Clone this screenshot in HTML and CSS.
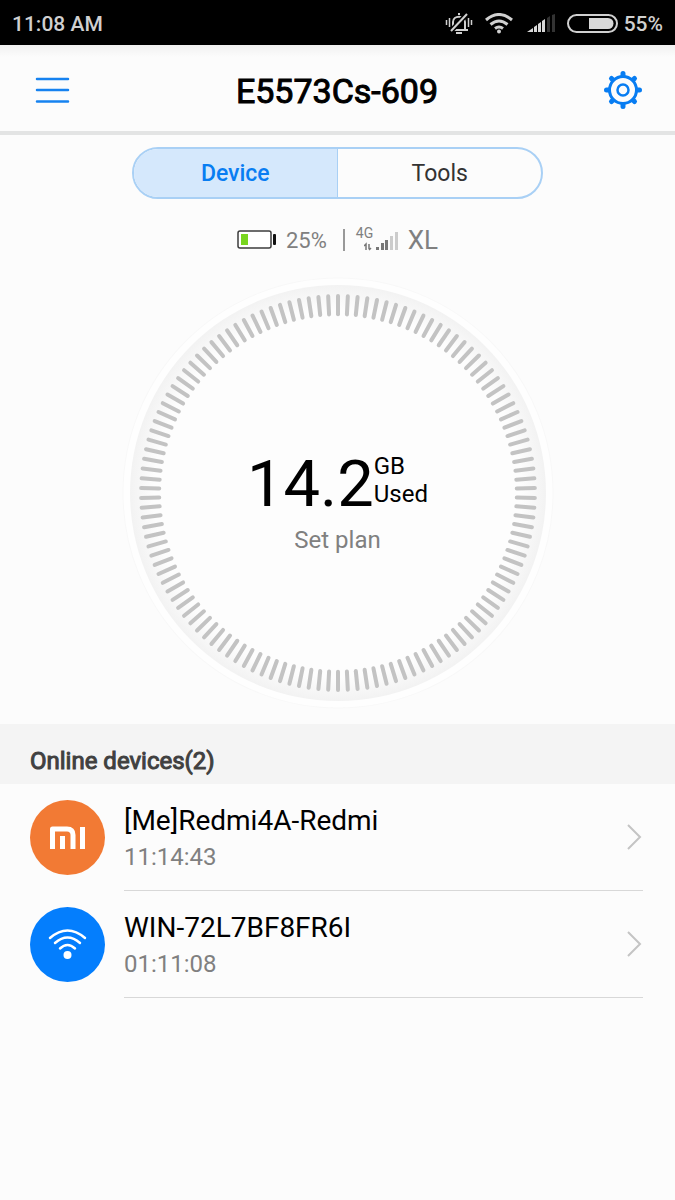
FILE: index.html
```html
<!DOCTYPE html>
<html lang="en">
<head>
<meta charset="utf-8">
<meta name="viewport" content="width=device-width, initial-scale=1">
<title>E5573Cs-609</title>
<link rel="stylesheet" href="styles.css">
</head>
<body>
<div class="status-bar">
  <span>11:08 AM</span>
  <div class="status-icons">
    <svg class="bell" width="28" height="24" viewBox="0 0 28 24" fill="none" stroke="#d0d0d0" stroke-width="2" aria-label="Silent">
      <path d="M6 18h17M8 17V10c0-7 12-7 12 0v7M11 21h6M14 1v2"/>
      <path d="M22 2L6 19" stroke="#000" stroke-width="5"/>
      <path d="M22 2L6 19"/>
      <path d="M1.500 8v5M4.500 6v9M23.500 6v9M26.500 8v5" stroke-width="1.500"/>
    </svg>
    <svg class="wifi" width="30" height="22" viewBox="0 0 30 22" fill="none" stroke="#d0d0d0" stroke-width="3" aria-label="Wi-Fi">
      <path d="M2 7q13-11 26 0M6.500 11.500q8.500-7 17 0M11 15.500q4-3 8 0"/>
      <circle cx="15" cy="18.500" r="2" fill="#d0d0d0" stroke="none"/>
    </svg>
    <svg class="bars" width="28" height="20" viewBox="0 0 28 20" aria-label="Signal">
      <path fill="#d8d8d8" d="M0 18l6-4v4zM7 13l3-2v7H7zM11 10l3-2v10h-3zM15 7l3-2v13h-3z"/>
      <path fill="#333" d="M20 4l3-2v16h-3zM25 1l3-1v18h-3z"/>
    </svg>
    <svg class="phone-battery" width="51" height="20" viewBox="0 0 51 20" aria-label="Battery">
      <rect x="1" y="1" width="49" height="17" rx="8.500" fill="none" stroke="#d0d0d0" stroke-width="2"/>
      <path fill="#d8d8d8" d="M22 4h19a5.500 5.500 0 0 1 0 11H22z"/>
    </svg>
    <span>55%</span>
  </div>
</div>

<header class="app-header">
  <button class="icon-button" aria-label="Menu">
    <svg width="36" height="38" viewBox="0 0 36 38" stroke="#1682f0" stroke-width="2.500" stroke-linecap="round"><path d="M3 8h31M3 19h31M3 30.500h31"/></svg>
  </button>
  <h1>E5573Cs-609</h1>
  <button class="icon-button" aria-label="Settings">
    <svg width="38" height="38" viewBox="-19 -19 38 38" fill="none" stroke="#087df2">
      <circle r="13.500" stroke-width="3"/><circle r="5.500" stroke-width="2.500"/>
      <path stroke-width="5" stroke-linecap="round" d="M0-14.500v-2M0 14.500v2M-14.500 0h-2M14.500 0h2M10.500-10.500l1-1M-10.500-10.500l-1-1M10.500 10.500l1 1M-10.500 10.500l-1 1"/>
    </svg>
  </button>
</header>

<main>
  <nav class="tabs" aria-label="Sections">
    <button class="tab active">Device</button>
    <button class="tab">Tools</button>
  </nav>

  <div class="router-status">
    <svg width="39" height="20" viewBox="0 0 39 20" aria-label="Router battery">
      <rect x="1" y="1" width="33" height="17" rx="2" fill="#fff" stroke="#3c3c3c" stroke-width="1.500"/>
      <rect x="4" y="4" width="7" height="11" fill="#78d51e"/>
      <rect x="36" y="4" width="3" height="11" rx="1" fill="#111"/>
    </svg>
    <span class="percent">25%</span>
    <span class="separator"></span>
    <span class="network">
      <span class="network-type">4G</span>
      <svg width="34" height="20" viewBox="0 0 34 20" aria-label="Network signal">
        <path d="M2 19v-5M0 15l2-2 0 2M5 13v5M5 19l2-2" stroke="#777" stroke-width="1.500" fill="none"/>
        <g fill="#777"><rect x="12" y="16" width="3" height="3"/><rect x="17" y="12" width="3" height="7"/><rect x="21" y="9" width="3" height="10"/></g>
        <g fill="#ccc"><rect x="26" y="5" width="3" height="14"/><rect x="31" y="1" width="3" height="18"/></g>
      </svg>
    </span>
    <span class="carrier">XL</span>
  </div>

  <section class="dial" aria-label="Data usage">
    <svg class="dial-ring" viewBox="-215 -215 430 430" aria-hidden="true">
      <defs>
        <radialGradient id="rim" gradientUnits="userSpaceOnUse" cx="0" cy="0" r="208">
          <stop offset=".88" stop-color="#fdfdfd"/>
          <stop offset="1" stop-color="#f2f2f2"/>
        </radialGradient>
      </defs>
      <circle r="214" fill="#fefefe" stroke="#f8f8f8"/>
      <circle r="207" fill="url(#rim)"/>
      <g id="ticks" stroke="#c3c3c3" stroke-width="4" stroke-linecap="round"></g>
    </svg>
    <div class="usage">
      <div class="usage-amount">
        <span class="amount">14.2</span>
        <span class="unit"><span>GB</span><span>Used</span></span>
      </div>
      <a class="plan" href="#plan">Set plan</a>
    </div>
  </section>

  <section>
    <h2>Online devices(2)</h2>
    <ul class="devices">
      <li>
        <a class="device" href="#redmi">
          <svg class="avatar" viewBox="0 0 75 75" aria-hidden="true">
            <circle cx="37.500" cy="37.500" r="37.500" fill="#f27a34"/>
            <g fill="none" stroke="#fff" stroke-width="5" stroke-linejoin="round">
              <path d="M22.500 49V29H37q6 0 6 6v14M32.500 36v13M52.500 27v22"/>
            </g>
          </svg>
          <span class="device-body">
            <span class="device-text"><span class="device-name">[Me]Redmi4A-Redmi</span><span class="device-time">11:14:43</span></span>
            <svg class="chevron" width="16" height="28" viewBox="0 0 16 28"><path d="M1 2l12 12L1 26"/></svg>
          </span>
        </a>
      </li>
      <li>
        <a class="device" href="#win">
          <svg class="avatar" viewBox="0 0 75 75" aria-hidden="true">
            <circle cx="37.500" cy="37.500" r="37.500" fill="#047efd"/>
            <g fill="none" stroke="#fff" stroke-width="2.500" stroke-linecap="round">
              <path d="M20 31q17.500-15 35 0M25 36q12.500-11 25 0M30 41.500q7.500-7 15 0"/>
            </g>
            <circle cx="37.500" cy="48" r="4" fill="#fff"/>
          </svg>
          <span class="device-body">
            <span class="device-text"><span class="device-name">WIN-72L7BF8FR6I</span><span class="device-time">01:11:08</span></span>
            <svg class="chevron" width="16" height="28" viewBox="0 0 16 28"><path d="M1 2l12 12L1 26"/></svg>
          </span>
        </a>
      </li>
    </ul>
  </section>
</main>
<script src="dial.js"></script>
</body>
</html>
```
FILE: styles.css
```css
* { box-sizing: border-box; }
body {
  margin: 0;
  background: #fcfcfc;
  color: #000;
  font-family: Roboto, "Liberation Sans", sans-serif;
  font-size: 24px;
}
button {
  font: inherit;
  border: 0;
  padding: 0;
  background: none;
  cursor: pointer;
}
a { color: inherit; text-decoration: none; }
svg { display: block; flex: none; }

.status-bar {
  display: flex;
  justify-content: space-between;
  align-items: center;
  height: 45px;
  padding: 2px 12px 0;
  background: #000;
  color: #d0d0d0;
  font-size: 21px;
  font-weight: 500;
}
.status-icons { display: flex; align-items: center; }
.wifi { margin-left: 11px; }
.bars { margin-left: 13px; }
.phone-battery { margin: 0 6px 0 12px; }

.app-header {
  display: flex;
  justify-content: space-between;
  align-items: center;
  height: 90px;
  padding: 4px 33px 0 34px;
  border-bottom: 4px solid #e3e4e4;
  background: linear-gradient(#f1f1f1, #fcfcfc 12px);
}
.app-header h1 {
  margin: 0;
  padding-top: 2px;
  font-size: 34px;
  line-height: 40px;
  font-weight: 400;
  -webkit-text-stroke: 1px;
}

.tabs {
  display: flex;
  width: 61%;
  height: 52px;
  margin: 12px auto 0;
  border: 2px solid #a9d0f5;
  border-radius: 26px;
  overflow: hidden;
}
.tab { flex: 1; color: #333; font-size: 23px; }
.tab.active {
  border-right: 1px solid #a9d0f5;
  background: #d5e8fc;
  color: #087df2;
  font-weight: 500;
}

.router-status {
  display: flex;
  justify-content: center;
  align-items: center;
  height: 32px;
  margin-top: 25px;
  color: #808080;
}
.percent { margin-left: 10px; font-size: 22px; }
.separator {
  width: 2px;
  height: 22px;
  margin: 0 11px 0 16px;
  background: #999;
}
.network { display: grid; }
.network > * { grid-area: 1 / 1; }
.network-type { font-size: 14px; line-height: 14px; margin-top: -3px; }
.network svg { margin-left: 8px; margin-top: 2px; }
.carrier { margin-left: 10px; font-size: 26px; }

.dial {
  display: grid;
  place-items: center;
  margin-top: 21px;
}
.dial > * { grid-area: 1 / 1; }
.dial-ring { width: 64%; }
.usage { text-align: center; padding-top: 18px; }
.usage-amount { display: flex; align-items: flex-start; justify-content: center; }
.amount { font-size: 65px; line-height: 72px; }
.unit {
  display: flex;
  flex-direction: column;
  text-align: left;
  line-height: 28px;
  padding-top: 4px;
}
.plan { display: block; margin-top: 4px; line-height: 32px; color: #808080; }

h2 {
  margin: 15px 0 0;
  padding: 22px 30px 8px;
  background: #f4f4f4;
  color: #404040;
  font-size: 24px;
  line-height: 30px;
  font-weight: 400;
  -webkit-text-stroke: 1px;
}
.devices { margin: 0; padding: 0; list-style: none; }
.device {
  display: flex;
  align-items: center;
  gap: 19px;
  padding: 0 32px 0 30px;
}
.avatar { width: 75px; height: 75px; }
.device-body {
  flex: 1;
  display: flex;
  align-items: center;
  justify-content: space-between;
  height: 107px;
  border-bottom: 1px solid #d8d8d8;
}
.device-text { display: flex; flex-direction: column; padding-top: 2px; }
.device-name { font-size: 28px; line-height: 38px; }
.device-time { line-height: 34px; color: #808080; }
.chevron { fill: none; stroke: #c4c4c4; stroke-width: 2; }
```
FILE: dial.js
```js
const TICKS = 126;
const group = document.getElementById('ticks');
for (let i = 0; i < TICKS; i++) {
  const line = document.createElementNS('http://www.w3.org/2000/svg', 'line');
  line.setAttribute('y1', -196);
  line.setAttribute('y2', -178);
  line.setAttribute('transform', `rotate(${i * 360 / TICKS})`);
  group.appendChild(line);
}
```
